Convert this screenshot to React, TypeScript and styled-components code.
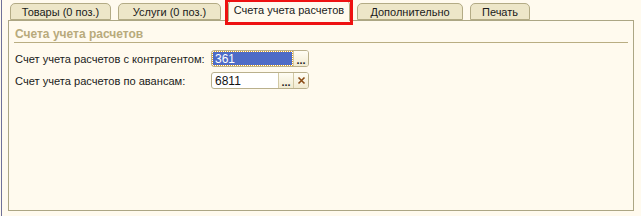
import styled, { createGlobalStyle } from 'styled-components';

const Global = createGlobalStyle`
    html, body {
        margin: 0;
        padding: 0;
        background: #fffaee;
    }
    body {
        font-family: "Liberation Sans", Arial, sans-serif;
        font-size: 11.1px;
        color: #1a1a1a;
    }
`;

const Page = styled.div`
    width: 641px;
    height: 216px;
    box-sizing: border-box;
    padding-left: 1px;
    display: flex;
    background: #fffaee;
`;

const Frame = styled.div`
    flex: 1;
    border-left: 1px solid #6f7199;
    padding: 0 7px 5px 6px;
    display: flex;
    flex-direction: column;
`;

const TabBar = styled.div`
    display: flex;
    align-items: flex-end;
    gap: 7px;
    height: 20px;
    padding-left: 2px;
    position: relative;
    z-index: 1;
`;

const Tab = styled.div<{ $active?: boolean; $w: number }>`
    position: relative;
    box-sizing: border-box;
    width: ${p => p.$w}px;
    height: ${p => (p.$active ? 21 : 17)}px;
    margin-bottom: ${p => (p.$active ? -1 : 0)}px;
    display: flex;
    align-items: center;
    justify-content: center;
    padding-bottom: ${p => (p.$active ? 2 : 0)}px;
    border: 1px solid #b3ab85;
    border-bottom: ${p => (p.$active ? 'none' : '1px solid #b3ab85')};
    border-radius: 5px 5px 0 0;
    background: ${p => (p.$active ? '#fffaee' : '#ede6c8')};
    font-size: 11px;
    white-space: nowrap;

    ${p => p.$active && `
        &::after {
            content: '';
            position: absolute;
            left: -4px;
            right: -4px;
            top: -2px;
            height: 26px;
            border: 3px solid #ee1111;
            box-sizing: border-box;
            pointer-events: none;
        }
    `}
`;

const Panel = styled.div`
    flex: 1;
    border: 1px solid #aca684;
    padding: 5px 5px 0 5px;
    display: flex;
    flex-direction: column;
`;

const SectionTitle = styled.div`
    font-weight: bold;
    color: #b8aa7c;
    font-size: 12px;
    line-height: 15px;
    padding: 1px 0 0 1px;
    border-bottom: 1px solid #b9ad82;
    margin-bottom: 7px;
`;

const Form = styled.div`
    display: grid;
    grid-template-columns: 196px auto;
    row-gap: 5px;
    align-items: center;
    padding-left: 1px;
`;

const Label = styled.div`
    white-space: nowrap;
`;

const Field = styled.div`
    display: flex;
    width: 98px;
    height: 17px;
    box-sizing: border-box;
    border: 1px solid #b9b08c;
    border-radius: 3px;
    background: #ffffff;
    overflow: hidden;
`;

const Value = styled.div<{ $selected?: boolean }>`
    flex: 1;
    display: flex;
    align-items: center;
    padding-left: 2px;
    margin: 1px;
    color: ${p => (p.$selected ? '#ffffff' : '#111111')};
    background: ${p => (p.$selected ? '#4e6bc6' : 'transparent')};
    outline: ${p => (p.$selected ? '1px dotted #e0a020' : 'none')};
    font-size: 12px;
`;

const Button = styled.div`
    width: 15px;
    display: flex;
    align-items: center;
    justify-content: center;
    border-left: 1px solid #d2c9a4;
    background: linear-gradient(#fffdf4, #f1ead0);
    color: #222;
    font-size: 11px;
    font-weight: bold;
    line-height: 1;
    padding-top: 4px;
    box-sizing: border-box;
`;

const ClearButton = styled(Button)`
    padding-top: 0;
    color: #8a4a14;
`;

export default function App() {
    return (
        <>
            <Global />
            <Page>
                <Frame>
                    <TabBar>
                        <Tab $w={101}>Товары (0 поз.)</Tab>
                        <Tab $w={103}>Услуги (0 поз.)</Tab>
                        <Tab $w={122} $active>Счета учета расчетов</Tab>
                        <Tab $w={106}>Дополнительно</Tab>
                        <Tab $w={60}>Печать</Tab>
                    </TabBar>
                    <Panel>
                        <SectionTitle>Счета учета расчетов</SectionTitle>
                        <Form>
                            <Label>Счет учета расчетов с контрагентом:</Label>
                            <Field>
                                <Value $selected>361</Value>
                                <Button>...</Button>
                            </Field>
                            <Label>Счет учета расчетов по авансам:</Label>
                            <Field>
                                <Value>6811</Value>
                                <Button>...</Button>
                                <ClearButton>
                                    <svg width="9" height="9" viewBox="0 0 9 9">
                                        <path d="M1.5 1.5 L7.5 7.5 M7.5 1.5 L1.5 7.5" stroke="#8a4a14" strokeWidth="1.6" />
                                    </svg>
                                </ClearButton>
                            </Field>
                        </Form>
                    </Panel>
                </Frame>
            </Page>
        </>
    );
}
